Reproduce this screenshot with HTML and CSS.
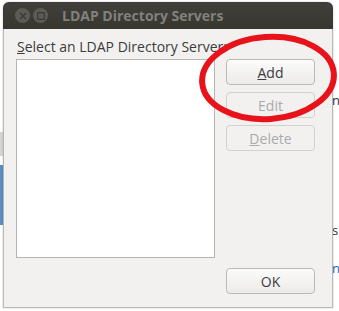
FILE: index.html
```html
<!DOCTYPE html>
<html lang="en">
<head>
    <title>LDAP Directory Servers</title>
    <link rel="stylesheet" href="styles.css">
</head>
<body>

<div class="backdrop">
    <div class="behind-gray"></div>
    <div class="behind-blue"></div>
    <span class="behind-text right-a">n</span>
    <span class="behind-text right-b">s</span>
    <span class="behind-text right-c">n</span>
</div>

<div class="window">
    <div class="titlebar">
        <span class="win-btn">
            <svg width="8" height="8" viewBox="0 0 8 8"><path d="M1 1 L7 7 M7 1 L1 7" stroke="#3a3935" stroke-width="1.4"/></svg>
        </span>
        <span class="win-btn">
            <svg width="8" height="8" viewBox="0 0 8 8"><rect x="0.7" y="0.7" width="6.6" height="6.6" fill="none" stroke="#3a3935" stroke-width="1.2"/></svg>
        </span>
        <span class="title">LDAP Directory Servers</span>
    </div>

    <div class="content">
        <label class="caption" for="servers"><u>S</u>elect an LDAP Directory Server:</label>
        <div class="main">
            <div class="server-list" id="servers"></div>
            <div class="actions">
                <button type="button" class="btn"><u>A</u>dd</button>
                <button type="button" class="btn" disabled>Edit</button>
                <button type="button" class="btn" disabled><u>D</u>elete</button>
            </div>
        </div>
        <div class="footer">
            <button type="button" class="btn">OK</button>
        </div>
    </div>

    <svg class="marker" width="150" height="100" viewBox="0 0 150 100">
        <ellipse cx="69" cy="45" rx="66" ry="41" fill="none" stroke="#e8121a" stroke-width="6" transform="rotate(-4 69 45)"/>
    </svg>
</div>

</body>
</html>
```

FILE: styles.css
```css
body {
  margin: 0;
  padding: 2px 0 0 3px;
  background: white;
  font-family: "Open Sans", "DejaVu Sans", sans-serif;
  position: relative;
  width: 339px;
  height: 311px;
  overflow: hidden;
  box-sizing: border-box;
}
.backdrop {
  position: absolute;
  left: 0;
  top: 0;
  width: 339px;
  height: 311px;
}
.behind-gray {
  position: absolute;
  left: 0;
  top: 132px;
  width: 4px;
  height: 24px;
  background: #d6d6d6;
}
.behind-blue {
  position: absolute;
  left: 0;
  top: 165px;
  width: 4px;
  height: 60px;
  background: #5d8fc6;
}
.behind-text {
  position: absolute;
  left: 332px;
  font-size: 13px;
  color: #333;
}
.right-a { top: 91px; }
.right-b { top: 221px; }
.right-c { top: 259px; color: #2d5fa8; }

.window {
  position: relative;
  width: 330px;
  height: 306px;
  background: #f2f1f0;
  border: 1px solid #b9b7b3;
  border-top: none;
  border-radius: 6px 6px 0 0;
  box-sizing: border-box;
  display: flex;
  flex-direction: column;
  box-shadow: 0 0 2px rgba(0, 0, 0, 0.25);
}
.titlebar {
  height: 27px;
  margin: 0 -1px;
  background: linear-gradient(#403f3b, #37362f);
  border-radius: 6px 6px 0 0;
  display: flex;
  align-items: center;
  padding-left: 12px;
  gap: 3px;
  flex-shrink: 0;
}
.win-btn {
  width: 15px;
  height: 15px;
  border-radius: 50%;
  background: #5c5b56;
  display: flex;
  align-items: center;
  justify-content: center;
}
.title {
  margin-left: 11px;
  font-family: "Open Sans", "DejaVu Sans", sans-serif;
  font-weight: bold;
  font-size: 14px;
  color: #82817c;
}
.content {
  flex: 1;
  display: flex;
  flex-direction: column;
  padding: 8px 17px 13px 12px;
}
.caption {
  font-size: 14px;
  line-height: 19px;
  color: #3c3c3c;
  margin-left: 1px;
  margin-bottom: 3px;
}
.caption u {
  text-decoration-thickness: 1px;
}
.main {
  display: flex;
  gap: 11px;
}
.server-list {
  width: 199px;
  height: 199px;
  background: white;
  border: 1px solid #b7b5b1;
  box-sizing: border-box;
}
.actions {
  display: flex;
  flex-direction: column;
  gap: 7px;
}
.btn {
  width: 89px;
  height: 26px;
  padding: 0;
  border: 1px solid #bcbab6;
  border-radius: 4px;
  background: linear-gradient(#fbfbfa, #ecebe9);
  font-family: "Open Sans", "DejaVu Sans", sans-serif;
  font-size: 14px;
  color: #3c3c3c;
  box-sizing: border-box;
}
.btn:disabled {
  color: #ababab;
  border-color: #d3d1cd;
  background: #f2f1f0;
}
.footer {
  margin-top: 10px;
  display: flex;
  justify-content: flex-end;
}
.marker {
  position: absolute;
  left: 195px;
  top: 31px;
}
```
